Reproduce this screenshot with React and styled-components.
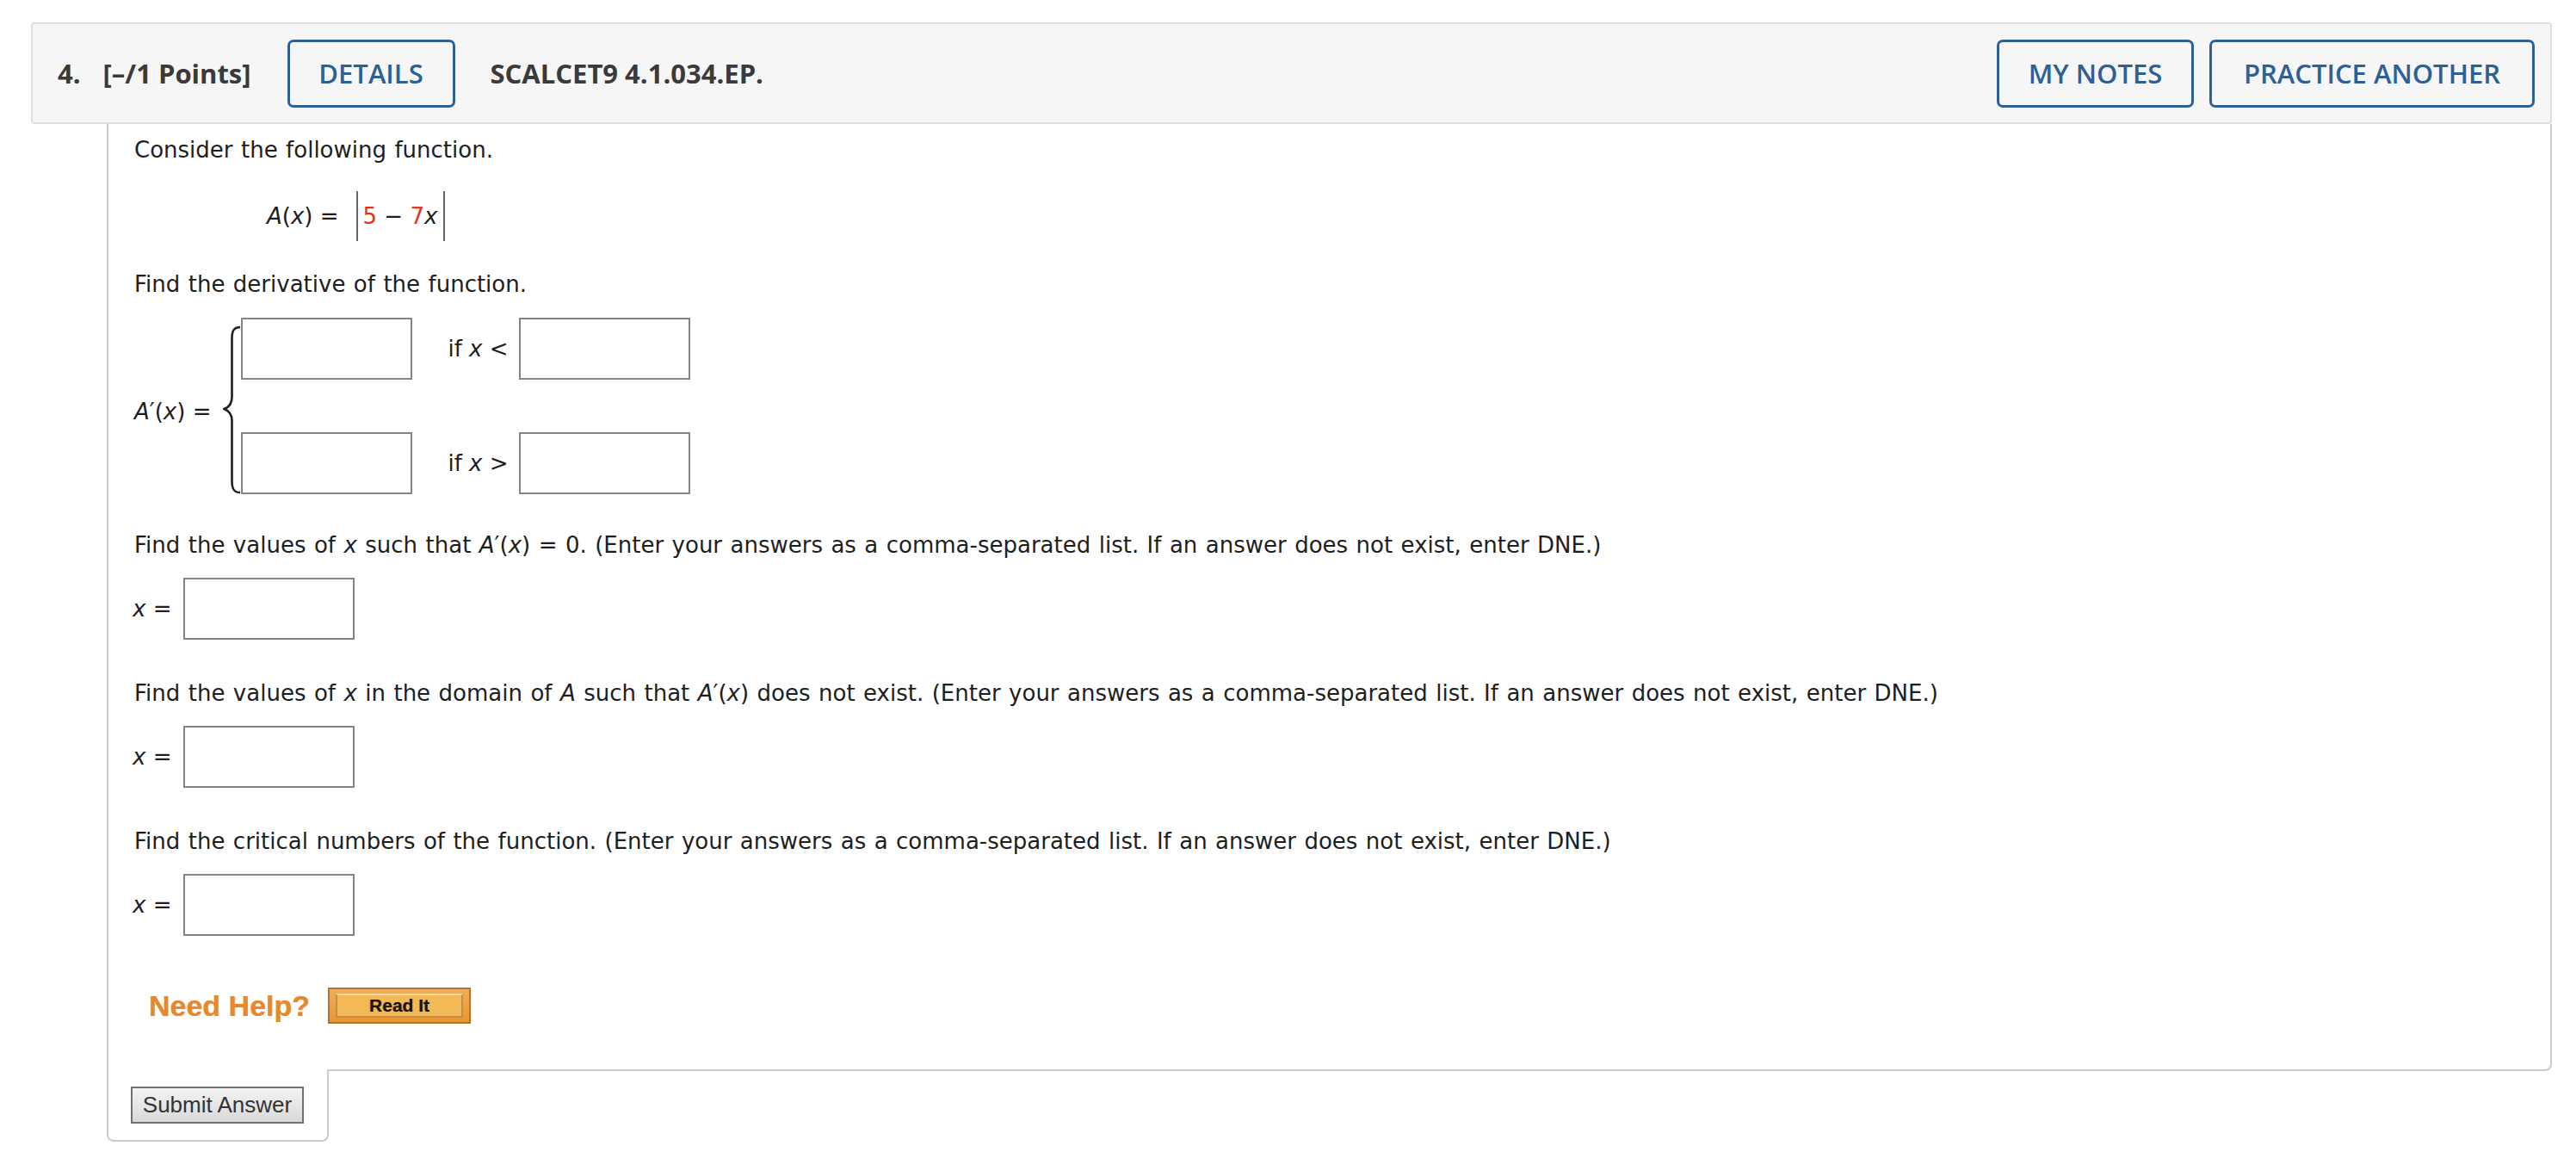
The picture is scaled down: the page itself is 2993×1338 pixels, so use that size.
import React from "react";
import styled, { createGlobalStyle } from "styled-components";

const GlobalStyle = createGlobalStyle`
  html, body { margin: 0; padding: 0; background: #ffffff; }
  body { font-family: "DejaVu Sans", Verdana, sans-serif; }
`;

const Page = styled.div`
  padding: 26px 28px 0 36px;
  box-sizing: border-box;
  width: 2993px;
`;

const Header = styled.div`
  display: flex;
  align-items: center;
  box-sizing: border-box;
  height: 118px;
  padding: 0 18px 0 29px;
  background: #f6f6f6;
  border: 2px solid #dedede;
  border-radius: 4px;
  font-family: "Open Sans", "Liberation Sans", sans-serif;
  font-size: 31px;
  font-weight: 700;
  color: #3a3a3a;
`;

const HeadText = styled.span`
  margin-left: ${(p) => p.$gap || 0}px;
  white-space: nowrap;
`;

const Spacer = styled.div`
  flex: 1;
`;

const OutlineButton = styled.button`
  box-sizing: border-box;
  height: 79px;
  width: ${(p) => p.$w}px;
  margin-left: ${(p) => p.$gap || 0}px;
  padding: 0;
  background: transparent;
  border: 3px solid #2d6195;
  border-radius: 7px;
  color: #2d6195;
  font-family: "Open Sans", "Liberation Sans", sans-serif;
  font-size: 31px;
  font-weight: 600;
  white-space: nowrap;
`;

const Body = styled.div`
  margin-left: 88px;
  padding: 12px 30px 50px 30px;
  border: 2px solid #cccccc;
  border-top: none;
  border-radius: 0 0 8px 0;
  font-size: 26px;
  line-height: 36px;
  color: #1e1e1e;
`;

const Para = styled.p`
  margin: ${(p) => p.$top || 0}px 0 0 0;
  word-spacing: 1.2px;
  white-space: nowrap;
`;

const I = styled.i`
  font-style: italic;
`;

const MathDisplay = styled.div`
  display: flex;
  align-items: center;
  height: 58px;
  margin-top: 30px;
  padding-left: 154px;
  white-space: pre;
`;

const Abs = styled.span`
  display: flex;
  align-items: center;
  box-sizing: border-box;
  height: 58px;
  margin-left: 20px;
  padding: 0 7px 0 6px;
  border-left: 2px solid #666;
  border-right: 2px solid #666;
`;

const Red = styled.span`
  color: #e4331d;
`;

const Piecewise = styled.div`
  display: flex;
  align-items: center;
  margin-top: 21px;
`;

const PieceLabel = styled.div`
  margin-top: 12px;
  margin-right: 14px;
  white-space: pre;
`;

const Brace = styled.svg`
  display: block;
  width: 21px;
  height: 205px;
  flex: none;
`;

const Cases = styled.div`
  display: flex;
  flex-direction: column;
  gap: 61px;
`;

const CaseRow = styled.div`
  display: flex;
  align-items: center;
`;

const Cond = styled.span`
  margin: 0 12px 0 41px;
  white-space: pre;
`;

const AnswerBox = styled.input`
  display: block;
  box-sizing: border-box;
  width: 199px;
  height: 72px;
  margin: 0;
  padding: 0 8px;
  border: 2px solid #858585;
  border-radius: 0;
  background: #ffffff;
  font: inherit;
  outline: none;
`;

const AnswerRow = styled.div`
  display: flex;
  align-items: center;
  margin-top: 20px;
`;

const AnswerLabel = styled.span`
  margin-left: -2px;
  margin-right: 14px;
  white-space: pre;
`;

const HelpRow = styled.div`
  display: flex;
  align-items: center;
  height: 42px;
  margin-top: 60px;
  margin-bottom: 3px;
  padding-left: 17px;
`;

const NeedHelp = styled.span`
  font-family: "Liberation Sans", Arial, sans-serif;
  font-weight: 700;
  font-size: 34px;
  line-height: 42px;
  color: #e8872c;
  text-shadow: 0 0 1px rgba(232, 135, 44, 0.7);
  white-space: nowrap;
`;

const ReadIt = styled.button`
  box-sizing: border-box;
  width: 166px;
  height: 42px;
  margin-left: 21px;
  padding: 5px 7px;
  border: 2px solid #b27530;
  border-radius: 0;
  background: linear-gradient(#f2ae55, #e8972f);
  display: flex;
`;

const ReadItFace = styled.span`
  flex: 1;
  display: flex;
  align-items: center;
  justify-content: center;
  border: 2px solid #c38d45;
  border-top-color: #f8d9a0;
  background: #f4b957;
  font-family: "Liberation Sans", Arial, sans-serif;
  font-weight: 700;
  font-size: 21px;
  color: #1c1408;
  text-shadow: 0 0 1px rgba(0, 0, 0, 0.5);
`;

const SubmitTab = styled.div`
  box-sizing: border-box;
  width: 258px;
  margin: -2px 0 0 88px;
  padding: 20px 0 19px 26px;
  background: #ffffff;
  border: 2px solid #cccccc;
  border-top: none;
  border-radius: 0 0 8px 8px;
  position: relative;
`;

const SubmitButton = styled.button`
  display: block;
  box-sizing: border-box;
  width: 201px;
  height: 43px;
  padding: 0;
  border: 2px solid #717171;
  border-radius: 0;
  background: linear-gradient(#f3f3f3, #d9d9d9);
  font-family: "Liberation Sans", Arial, sans-serif;
  font-size: 26px;
  color: #333333;
`;

const Ap = () => (
  <>
    <I>A</I>′(<I>x</I>)
  </>
);

const Answer = () => (
  <AnswerRow>
    <AnswerLabel>
      <I>x</I> =
    </AnswerLabel>
    <AnswerBox type="text" />
  </AnswerRow>
);

export default function App() {
  return (
    <>
      <GlobalStyle />
      <Page>
        <Header>
          <HeadText>4.</HeadText>
          <HeadText $gap={26}>[–/1 Points]</HeadText>
          <OutlineButton $w={195} $gap={42}>DETAILS</OutlineButton>
          <HeadText $gap={41}>SCALCET9 4.1.034.EP.</HeadText>
          <Spacer />
          <OutlineButton $w={229}>MY NOTES</OutlineButton>
          <OutlineButton $w={378} $gap={18}>PRACTICE ANOTHER</OutlineButton>
        </Header>
        <Body>
          <Para>Consider the following function.</Para>
          <MathDisplay>
            <I>A</I>(<I>x</I>) =
            <Abs>
              <Red>5</Red> − <Red>7</Red>
              <I>x</I>
            </Abs>
          </MathDisplay>
          <Para $top={32}>Find the derivative of the function.</Para>
          <Piecewise>
            <PieceLabel>
              <Ap /> =
            </PieceLabel>
            <Brace viewBox="0 0 21 205">
              <path
                d="M20,11 C13,11 10.5,15 10.5,24 L10.5,92 C10.5,100 7,104 1.5,106 C7,108 10.5,112 10.5,120 L10.5,190 C10.5,199 13,203 20,203"
                fill="none"
                stroke="#1e1e1e"
                strokeWidth="2.6"
              />
            </Brace>
            <Cases>
              <CaseRow>
                <AnswerBox type="text" />
                <Cond>
                  if <I>x</I> &lt;
                </Cond>
                <AnswerBox type="text" />
              </CaseRow>
              <CaseRow>
                <AnswerBox type="text" />
                <Cond>
                  if <I>x</I> &gt;
                </Cond>
                <AnswerBox type="text" />
              </CaseRow>
            </Cases>
          </Piecewise>
          <Para $top={41}>
            Find the values of <I>x</I> such that <Ap /> = 0. (Enter your answers as a
            comma-separated list. If an answer does not exist, enter DNE.)
          </Para>
          <Answer />
          <Para $top={44}>
            Find the values of <I>x</I> in the domain of <I>A</I> such that <Ap /> does not
            exist. (Enter your answers as a comma-separated list. If an answer does not
            exist, enter DNE.)
          </Para>
          <Answer />
          <Para $top={44}>
            Find the critical numbers of the function. (Enter your answers as a
            comma-separated list. If an answer does not exist, enter DNE.)
          </Para>
          <Answer />
          <HelpRow>
            <NeedHelp>Need Help?</NeedHelp>
            <ReadIt>
              <ReadItFace>Read It</ReadItFace>
            </ReadIt>
          </HelpRow>
        </Body>
        <SubmitTab>
          <SubmitButton>Submit Answer</SubmitButton>
        </SubmitTab>
      </Page>
    </>
  );
}
